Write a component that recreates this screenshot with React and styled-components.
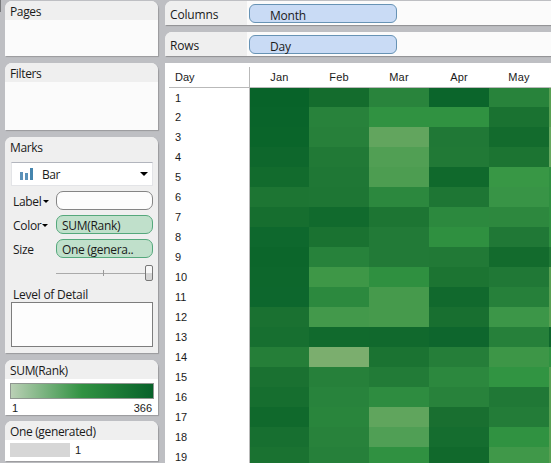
import React from 'react';
import styled, { createGlobalStyle } from 'styled-components';

const MONTHS = ['Jan', 'Feb', 'Mar', 'Apr', 'May', ''];

const DAYS = [
  ['#086329', '#146c2d', '#29843c', '#0b652b', '#28833b', '#58a052'],
  ['#09642a', '#28823b', '#309241', '#309241', '#1a7231', '#58a052'],
  ['#0a652a', '#27803a', '#62a55e', '#207836', '#136b2d', '#66a85f'],
  ['#0e672c', '#217936', '#519f54', '#217936', '#1c7432', '#66a85f'],
  ['#126b2d', '#1f7735', '#4d9d51', '#10692c', '#389745', '#2f8f40'],
  ['#1d7533', '#1e7634', '#2c883e', '#1e7634', '#389446', '#2f8f40'],
  ['#166e2f', '#116a2d', '#1d7533', '#2c893e', '#2d883e', '#2f8f40'],
  ['#0e682d', '#1a7231', '#227a37', '#2f9040', '#207836', '#2f8f40'],
  ['#0c662b', '#27823b', '#227a37', '#217936', '#136b2d', '#217936'],
  ['#0d672c', '#3e9747', '#2f9040', '#1c7432', '#207836', '#58a052'],
  ['#0d672d', '#2c893e', '#469a4c', '#11692d', '#26803a', '#58a052'],
  ['#1a7131', '#43994b', '#469a4c', '#186f30', '#3c9648', '#58a052'],
  ['#176f30', '#116a2d', '#11692d', '#0e662d', '#26803a', '#0e672c'],
  ['#257e38', '#7bae6e', '#1b7332', '#257e39', '#3d9647', '#309241'],
  ['#1a7131', '#26803a', '#227b37', '#2c883e', '#319442', '#58a052'],
  ['#166e2f', '#28833c', '#2e8c40', '#28823b', '#207836', '#58a052'],
  ['#10692c', '#29853c', '#60a55d', '#196f30', '#237c38', '#58a052'],
  ['#176f30', '#28823b', '#509f55', '#156d2f', '#309241', '#58a052'],
  ['#1a7231', '#26803a', '#309141', '#11692c', '#409849', '#58a052'],
];

function App() {
  return (
    <>
      <GlobalStyle />
      <Workspace>
        <Sidebar>
          <Card $height={55}>
            <CardTitle>Pages</CardTitle>
          </Card>
          <Card $height={67}>
            <CardTitle>Filters</CardTitle>
          </Card>
          <MarksCard $height={216}>
            <CardTitle>Marks</CardTitle>
            <MarkType>
              <BarIcon />
              <span>Bar</span>
              <Caret $size={4} />
            </MarkType>
            <Fields>
              <Field>
                <FieldName>
                  Label
                  <Caret $size={3} />
                </FieldName>
                <Pill />
              </Field>
              <Field>
                <FieldName>
                  Color
                  <Caret $size={3} />
                </FieldName>
                <Pill $filled>SUM(Rank)</Pill>
              </Field>
              <Field>
                <FieldName>Size</FieldName>
                <Pill $filled>One (genera..</Pill>
              </Field>
            </Fields>
            <Slider>
              <Track $width={47} />
              <Tick />
              <Track $width={41} />
              <Thumb />
            </Slider>
            <DetailTitle>Level of Detail</DetailTitle>
            <DetailBox />
          </MarksCard>
          <LegendCard $height={55}>
            <CardTitle>SUM(Rank)</CardTitle>
            <ColorRamp />
            <RampLabels>
              <span>1</span>
              <span>366</span>
            </RampLabels>
          </LegendCard>
          <LegendCard $height={40}>
            <CardTitle>One (generated)</CardTitle>
            <SizeLegend>
              <SizeBar />
              <span>1</span>
            </SizeLegend>
          </LegendCard>
        </Sidebar>
        <Main>
          <Shelf>
            <ShelfName>Columns</ShelfName>
            <ShelfPill>Month</ShelfPill>
          </Shelf>
          <Shelf>
            <ShelfName>Rows</ShelfName>
            <ShelfPill>Day</ShelfPill>
          </Shelf>
          <Sheet>
            <HeaderRow>
              <DayHeader>Day</DayHeader>
              {MONTHS.map((month) => (
                <MonthHeader key={month}>{month}</MonthHeader>
              ))}
            </HeaderRow>
            {DAYS.map((colors, index) => (
              <DayRow key={index}>
                <DayName>{index + 1}</DayName>
                {colors.map((color, month) => (
                  <Cell key={month} $color={color} />
                ))}
              </DayRow>
            ))}
          </Sheet>
        </Main>
      </Workspace>
    </>
  );
}

function BarIcon() {
  return (
    <BarSvg width="14" height="13" viewBox="0 0 14 13">
      <rect x="0" y="4" width="3" height="8" fill="#5b91b8" />
      <rect x="5" y="5" width="3" height="7" fill="#5b91b8" />
      <rect x="10" y="0" width="3" height="12" fill="#4585ae" />
    </BarSvg>
  );
}

export default App;

const GlobalStyle = createGlobalStyle`
  * {
    box-sizing: border-box;
  }

  body {
    margin: 0;
    overflow: hidden;
    background: #bebfc3;
    color: #1a1a1a;
    font-family: 'Open Sans', 'Noto Sans', sans-serif;
    font-size: 12px;
  }
`;

const Workspace = styled.div`
  display: flex;
  width: 551px;
  height: 463px;
  padding-top: 1px;
  overflow: hidden;
  background: linear-gradient(#77787b, #77787b) 0 0 / 1px 12px no-repeat, #bebfc3;
`;

const Sidebar = styled.div`
  display: flex;
  flex-direction: column;
  gap: 7px;
  width: 165px;
  padding-left: 5px;
  flex-shrink: 0;
`;

const Card = styled.div`
  width: 153px;
  height: ${({ $height }) => $height}px;
  flex-shrink: 0;
  border-radius: 7px 7px 0 0;
  background: #fbfbfb;
  box-shadow: 1px 1px 1px #999a9d;
`;

const MarksCard = styled(Card)`
  background: #efefef;
`;

const LegendCard = styled(Card)`
  background: #fff;

  & + & {
    margin-top: -1px;
  }
`;

const CardTitle = styled.div`
  height: 19px;
  padding-left: 5px;
  border-radius: 7px 7px 0 0;
  background: #efefef;
  line-height: 21px;
  letter-spacing: -0.35px;
  white-space: nowrap;
`;

const MarkType = styled.div`
  display: flex;
  align-items: center;
  width: 142px;
  height: 24px;
  margin: 6px 0 0 6px;
  padding: 0 4px 0 8px;
  border: 1px solid #e3e4e7;
  border-top-color: #b2b5bd;
  background: #fff;

  span {
    flex: 1;
    margin-left: 8px;
    letter-spacing: -0.4px;
  }
`;

const BarSvg = styled.svg`
  display: block;
`;

const Caret = styled.i`
  border: ${({ $size }) => $size}px solid transparent;
  border-top-color: #000;
  border-bottom: 0;
`;

const Fields = styled.div`
  display: flex;
  flex-direction: column;
  gap: 5px;
  margin: 5px 0 0 8px;
`;

const Field = styled.div`
  display: flex;
  height: 19px;
`;

const FieldName = styled.div`
  display: flex;
  align-items: center;
  gap: 1px;
  width: 43px;
  padding-top: 1px;
  letter-spacing: -0.3px;
`;

const Pill = styled.div`
  width: 97px;
  height: 19px;
  padding-left: 5px;
  border: 1px solid ${({ $filled }) => ($filled ? '#55a87c' : '#858585')};
  border-radius: 7px;
  background: ${({ $filled }) => ($filled ? '#c0e0cb' : '#fdfdfd')};
  line-height: 20px;
  letter-spacing: -0.3px;
  white-space: nowrap;
`;

const Slider = styled.div`
  display: flex;
  align-items: center;
  width: 97px;
  height: 18px;
  margin: 6px 0 0 51px;
`;

const Track = styled.div`
  width: ${({ $width }) => $width}px;
  height: 1px;
  background: #aaa;
`;

const Tick = styled.div`
  width: 1px;
  height: 6px;
  background: #999;
`;

const Thumb = styled.div`
  width: 8px;
  height: 16px;
  border: 1px solid #777;
  border-radius: 2px;
  background: linear-gradient(#f7f7f7 50%, #d5d5d5 50%);
`;

const DetailTitle = styled.div`
  height: 20px;
  padding: 3px 0 0 8px;
  line-height: 20px;
  letter-spacing: -0.25px;
`;

const DetailBox = styled.div`
  width: 142px;
  height: 45px;
  margin-left: 6px;
  border: 1px solid #7d7d7d;
  background: #fdfdfd;
`;

const ColorRamp = styled.div`
  width: 144px;
  height: 16px;
  margin: 4px 0 0 5px;
  border: 1px solid #8f9690;
  background: linear-gradient(90deg, #bad0b5, #319242 50%, #08622a);
`;

const RampLabels = styled.div`
  display: flex;
  justify-content: space-between;
  padding: 3px 6px 0 7px;
  font-family: 'Liberation Sans', Arial, sans-serif;
  font-size: 11px;
  line-height: 13px;
`;

const SizeLegend = styled.div`
  display: flex;
  align-items: center;
  gap: 5px;
  padding: 3px 0 0 5px;
  font-family: 'Liberation Sans', Arial, sans-serif;
  font-size: 11px;
  line-height: 14px;
`;

const SizeBar = styled.div`
  width: 60px;
  height: 14px;
  background: #d6d6d6;
`;

const Main = styled.div`
  flex: 1;
  min-width: 0;
`;

const Shelf = styled.div`
  display: flex;
  height: 24px;
  margin-bottom: 7px;
  border-radius: 7px 0 0 0;
  background: #fbfbfb;
  box-shadow: 1px 1px 1px #8f9093;
`;

const ShelfName = styled.div`
  width: 82px;
  padding-left: 5px;
  border-radius: 7px 0 0 0;
  background: #efefef;
  line-height: 27px;
  letter-spacing: -0.15px;
`;

const ShelfPill = styled.div`
  width: 148px;
  height: 19px;
  margin: 3px 0 0 2px;
  padding-left: 20px;
  border: 1px solid #6793b5;
  border-radius: 6px;
  background: #c9dbf5;
  line-height: 21px;
  letter-spacing: -0.2px;
`;

const Sheet = styled.div`
  height: 400px;
  padding-left: 4px;
  overflow: hidden;
  background: #fff;
  font-family: 'Liberation Sans', Arial, sans-serif;
  font-size: 11px;
`;

const HeaderRow = styled.div`
  display: flex;
  height: 25px;
  padding-top: 4px;
  border-bottom: 1px solid #b9b9b9;
  line-height: 21px;
`;

const DayHeader = styled.div`
  width: 81px;
  padding-left: 6px;
  border-right: 1px solid #b9b9b9;
  flex-shrink: 0;
`;

const MonthHeader = styled.div`
  width: 60px;
  flex-shrink: 0;
  text-align: center;
  letter-spacing: 0.2px;

  &:nth-child(2) {
    width: 59px;
  }
`;

const DayRow = styled.div`
  display: flex;
  height: 20px;

  &:nth-child(2) {
    height: 19px;
  }
`;

const DayName = styled.div`
  width: 81px;
  padding-left: 6px;
  border-right: 1px solid #b9b9b9;
  flex-shrink: 0;
  line-height: 21px;
`;

const Cell = styled.div`
  width: 60px;
  flex-shrink: 0;
  background: ${({ $color }) => $color};

  &:nth-child(2) {
    width: 59px;
  }
`;
